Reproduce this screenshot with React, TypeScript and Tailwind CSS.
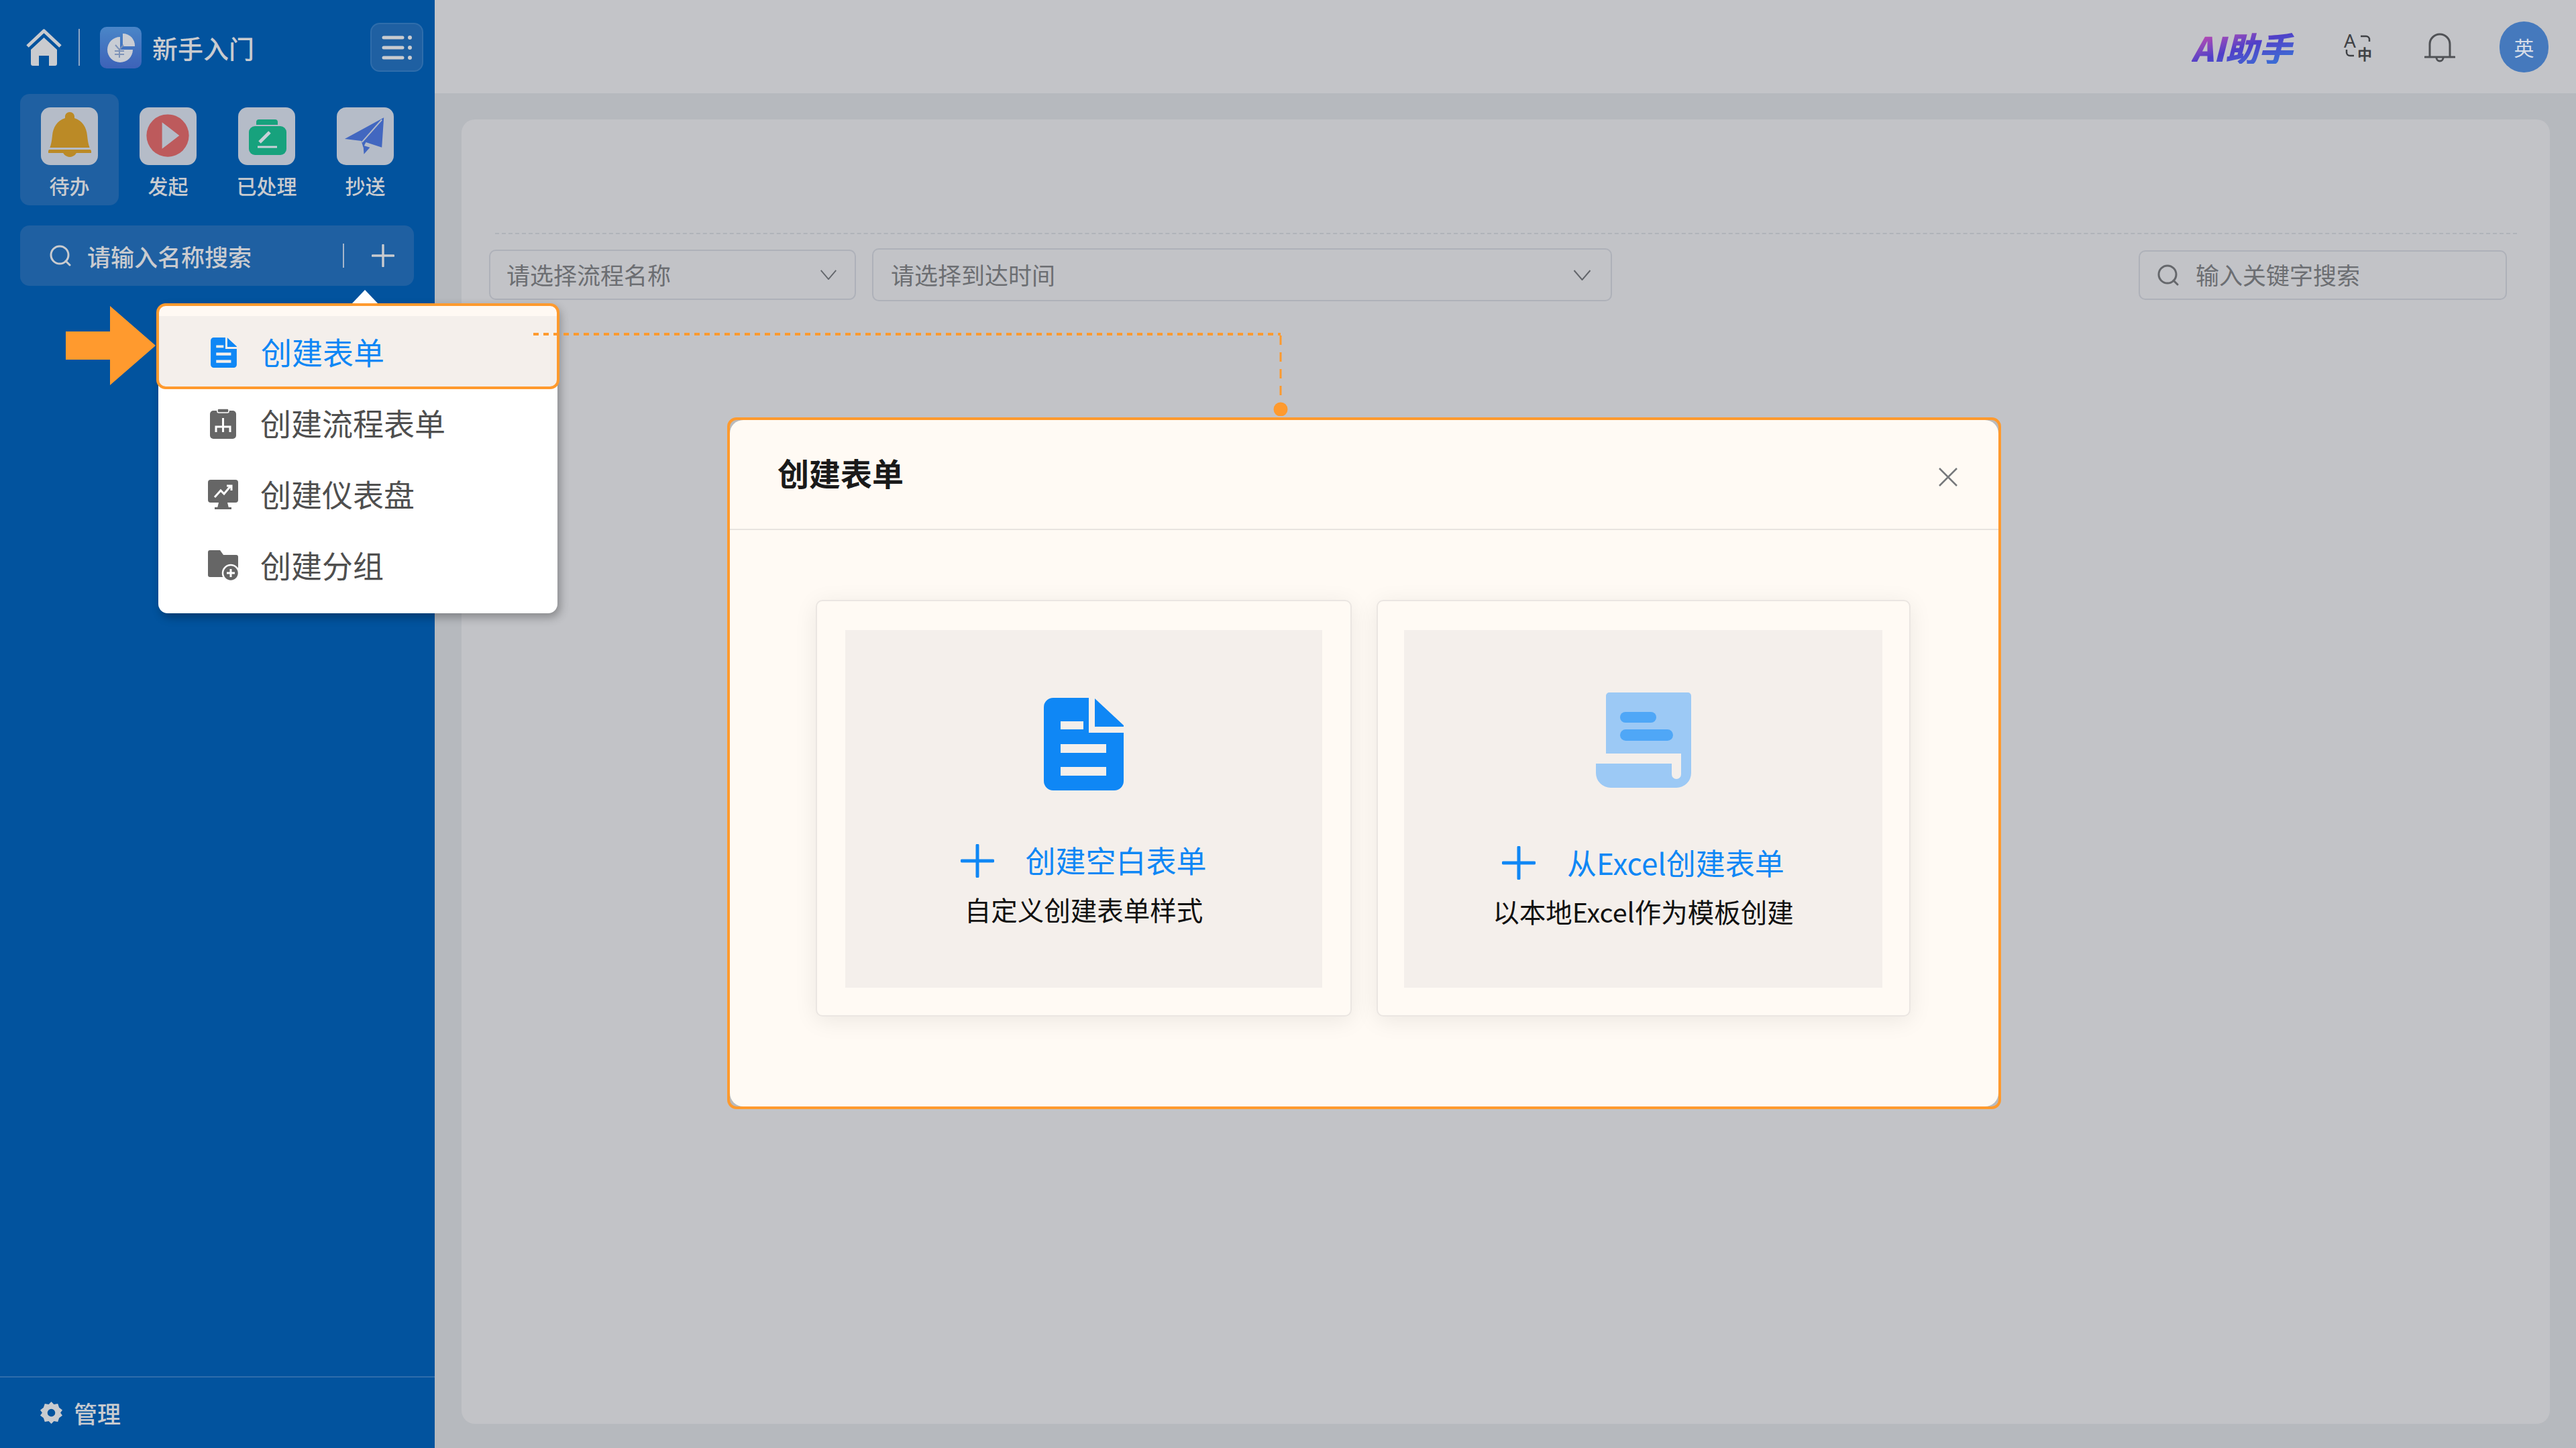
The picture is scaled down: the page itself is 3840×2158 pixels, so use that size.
import React from "react";

const DocIcon = ({ className }: { className: string }) => (
  <svg viewBox="0 0 119 138" className={className}>
    <path
      fillRule="evenodd"
      fill="currentColor"
      d="M14 0H67V52H119V124a14 14 0 0 1-14 14H14A14 14 0 0 1 0 124V14A14 14 0 0 1 14 0ZM25 35V47H59V35ZM25 69V82H93V69ZM25 103V116H93V103Z"
    />
    <path fill="currentColor" d="M76 1L119 41V43H76Z" />
  </svg>
);

const ScrollIcon = () => (
  <svg viewBox="0 0 142 142" className="w-[142px] h-[142px]">
    <path
      fill="#9cc9f5"
      d="M15 5a5 5 0 0 1 5-5H137a5 5 0 0 1 5 5V120a22 22 0 0 1-22 22H22A22 22 0 0 1 0 120V106H113V122a7 7 0 0 0 14 0V91H15Z"
    />
    <rect x="36" y="29" width="54" height="16" rx="8" fill="#4fa7f7" />
    <rect x="36" y="55" width="79" height="17" rx="8.5" fill="#4fa7f7" />
  </svg>
);

const Plus = ({ className }: { className: string }) => (
  <svg viewBox="0 0 50 50" className={className}>
    <path d="M25 2V48M2 25H48" stroke="currentColor" strokeWidth="5" strokeLinecap="round" fill="none" />
  </svg>
);

const SearchIcon = ({ className }: { className: string }) => (
  <svg viewBox="0 0 32 32" className={className}>
    <circle cx="15" cy="15" r="13" fill="none" stroke="currentColor" strokeWidth="3" />
    <path d="M24 24L30 30" stroke="currentColor" strokeWidth="3" strokeLinecap="round" />
  </svg>
);

const Chevron = ({ className }: { className: string }) => (
  <svg viewBox="0 0 26 16" className={className}>
    <path d="M1 1L13 15L25 1" fill="none" stroke="#63666b" strokeWidth="2" />
  </svg>
);

const Bell = () => (
  <svg viewBox="0 0 84 86" className="w-[84px] h-[86px]">
    <path
      fill="#bb8a26"
      d="M42 7c4 0 7 3 7 7v2c12 4 18 14 19 26 1 9 2 16 6 23v3H10v-3c4-7 5-14 6-23 1-12 7-22 19-26v-2c0-4 3-7 7-7Z"
    />
    <path fill="#bb8a26" d="M30 62H54C53 69 48 74 42 74S31 69 30 62Z" />
    <rect x="10" y="60" width="64" height="3" fill="#b5bcc8" />
  </svg>
);

const Play = () => (
  <svg viewBox="0 0 86 86" className="w-[86px] h-[86px]">
    <circle cx="42.5" cy="42" r="32" fill="#bd5a5c" />
    <path d="M34 22L60 42L34 62Z" fill="#b5bcc8" />
  </svg>
);

const Done = () => (
  <svg viewBox="0 0 84 86" className="w-[84px] h-[86px]">
    <path d="M26 26V22a4 4 0 0 1 4-4H54a4 4 0 0 1 4 4V26Z" fill="#17a27d" />
    <rect x="15" y="28" width="56" height="43" rx="9" fill="#17a27d" />
    <path d="M31 52L46 37" stroke="#c9d0d8" strokeWidth="5" />
    <path d="M28 59H57" stroke="#c9d0d8" strokeWidth="3" />
  </svg>
);

const PlaneIcon = () => (
  <svg viewBox="0 0 86 86" className="w-[86px] h-[86px]">
    <path fill="#4267c0" d="M71 15L68 60L44 52L40 60L37 50L12 47Z" />
    <path d="M68 18L38 52" stroke="#b5bcc8" strokeWidth="2" />
    <path fill="#4267c0" d="M40 57L50 60L41 70Z" />
  </svg>
);

const FlowIcon = () => (
  <svg viewBox="0 0 39 46" className="w-[39px] h-[46px]">
    <rect x="0" y="4" width="39" height="42" rx="5" fill="#666" />
    <rect x="11" y="1" width="17" height="6" rx="2" fill="#666" stroke="#fff" strokeWidth="1.5" />
    <path d="M19.5 15V24M9 36V28H30V36M19.5 24V36" stroke="#fff" strokeWidth="3" fill="none" />
  </svg>
);

const MonitorIcon = () => (
  <svg viewBox="0 0 45 44" className="w-[45px] h-[44px]">
    <rect x="0" y="0" width="45" height="34" rx="4" fill="#666" />
    <path d="M16 34H29L31 42H14Z" fill="#666" />
    <path d="M10 44H35V41H10Z" fill="#666" />
    <path d="M10 26L19 16L24 21L34 9M28 9H35V16" stroke="#fff" strokeWidth="3" fill="none" />
  </svg>
);

const FolderIcon = () => (
  <svg viewBox="0 0 45 46" className="w-[45px] h-[46px]">
    <path d="M0 3a3 3 0 0 1 3-3H18L23 7H42a3 3 0 0 1 3 3V40H3a3 3 0 0 1-3-3Z" fill="#666" />
    <circle cx="34" cy="34" r="12" fill="#666" stroke="#fff" strokeWidth="2.5" />
    <path d="M34 28V40M28 34H40" stroke="#fff" strokeWidth="3" />
  </svg>
);

const Tab = ({
  label,
  icon,
  active,
}: {
  label: string;
  icon: React.ReactNode;
  active?: boolean;
}) => (
  <div
    className={`w-[147px] h-[166px] rounded-[14px] flex flex-col items-center pt-[20px] ${active ? "bg-[#1f60a2]" : ""}`}
  >
    <div className="w-[85px] h-[86px] rounded-[14px] bg-[#b5bcc8] flex items-center justify-center overflow-hidden">
      {icon}
    </div>
    <div className="mt-[13px] text-[30px] leading-[34px] font-medium text-[#c9cbcf] whitespace-nowrap">{label}</div>
  </div>
);

const MenuRow = ({ icon, label }: { icon: React.ReactNode; label: string }) => (
  <div className="h-[106px] flex items-center pl-[73px] text-[46px] text-[#4f4f4f]">
    <div className="w-[47px] flex justify-center">{icon}</div>
    <span className="ml-[32px] leading-none pb-[4px]">{label}</span>
  </div>
);

export default function App() {
  return (
    <div className="relative w-[3840px] h-[2158px] overflow-hidden flex bg-[#b6b9be] font-['Noto_Sans_CJK_SC','Noto_Sans',sans-serif]">
      {/* sidebar */}
      <aside className="w-[648px] h-full shrink-0 bg-[#02539e] flex flex-col">
        <div className="mt-[34px] h-[73px] flex items-center pl-[38px] pr-[17px]">
          <svg viewBox="0 0 55 55" className="w-[55px] h-[55px]">
            <path d="M3 26L27.5 3L52 26" fill="none" stroke="#c9cbcf" strokeWidth="5" strokeLinejoin="round" />
            <path
              fill="#c9cbcf"
              d="M27.5 13L47 31V52a3 3 0 0 1-3 3H35V40H20V55H11a3 3 0 0 1-3-3V31Z"
            />
          </svg>
          <div className="ml-[24px] w-[2px] h-[55px] bg-[#8ea7c5]" />
          <div className="ml-[30px] w-[62px] h-[62px] rounded-[10px] bg-linear-to-b from-[#4a86c8] to-[#3d62b8] flex items-center justify-center">
            <svg viewBox="0 0 44 44" className="w-[44px] h-[44px]">
              <path d="M21 6A19 19 0 1 0 40 25H21Z" fill="#c9cdd4" />
              <path d="M25 1A18 18 0 0 1 43 20H25Z" fill="#c9cdd4" />
              <path d="M14 18L20 25L26 18M20 25V37M13 27H27M13 32H27" stroke="#7e93b8" strokeWidth="2" fill="none" />
            </svg>
          </div>
          <span className="ml-[16px] text-[38px] leading-none font-medium text-[#c9cbcf] whitespace-nowrap">新手入门</span>
          <div className="ml-auto w-[79px] h-[73px] rounded-[14px] bg-[#1f60a2] border-2 border-[#2f6dab] flex items-center justify-center">
            <svg viewBox="0 0 46 42" className="w-[46px] h-[42px]">
              <g stroke="#c9cbcf" strokeWidth="5" strokeLinecap="round">
                <path d="M3 6H31M3 21H31M3 36H31" />
              </g>
              <g fill="#c9cbcf">
                <circle cx="42" cy="6" r="3" />
                <circle cx="42" cy="21" r="3" />
                <circle cx="42" cy="36" r="3" />
              </g>
            </svg>
          </div>
        </div>

        <div className="mt-[33px] pl-[30px] flex">
          <Tab label="待办" icon={<Bell />} active />
          <Tab label="发起" icon={<Play />} />
          <Tab label="已处理" icon={<Done />} />
          <Tab label="抄送" icon={<PlaneIcon />} />
        </div>

        <div className="mt-[30px] ml-[30px] w-[587px] h-[90px] rounded-[14px] bg-[#1f60a2] flex items-center pl-[44px] text-[#c9cbcf]">
          <SearchIcon className="w-[32px] h-[32px]" />
          <span className="ml-[24px] text-[35px] leading-none font-medium whitespace-nowrap">请输入名称搜索</span>
          <div className="ml-[136px] w-[2px] h-[36px] bg-[#a6b6cb]" />
          <Plus className="ml-[41px] w-[34px] h-[34px]" />
        </div>

        <div className="mt-auto h-[107px] border-t-2 border-[#2f6dab] flex items-center pl-[60px] text-[#c9cbcf]">
          <svg viewBox="0 0 34 34" className="w-[33px] h-[33px]">
            <path
              fillRule="evenodd"
              fill="currentColor"
              d="M17 0L21 4L27 3L29 9L34 13L31 17L34 21L29 25L27 31L21 30L17 34L13 30L7 31L5 25L0 21L3 17L0 13L5 9L7 3L13 4ZM17 11a6 6 0 1 0 0 12a6 6 0 1 0 0-12Z"
            />
          </svg>
          <span className="ml-[17px] text-[35px] leading-none font-medium">管理</span>
        </div>
      </aside>

      {/* main column */}
      <main className="flex-1 flex flex-col">
        <header className="h-[139px] shrink-0 bg-[#c3c4c8] flex items-center pr-[41px] justify-end">
          <span className="pr-[4px] text-[50px] leading-none font-black italic whitespace-nowrap bg-linear-to-br from-[#e03aa8] via-[#4f3fc8] to-[#2f78d8] bg-clip-text text-transparent">
            AI助手
          </span>
          <svg viewBox="0 0 42 42" className="ml-[74px] w-[42px] h-[42px] overflow-visible">
            <text x="-1" y="22" fontSize="28" fill="#3f4145" fontFamily="Noto Sans">
              A
            </text>
            <text x="19" y="40" fontSize="22" fontWeight="700" fill="#3f4145" fontFamily="Noto Sans CJK SC">
              中
            </text>
            <path d="M24 5H32a5 5 0 0 1 5 5V13M3 25V29a5 5 0 0 0 5 5H14" fill="none" stroke="#3f4145" strokeWidth="2.5" />
          </svg>
          <svg viewBox="0 0 46 46" className="ml-[77px] w-[46px] h-[46px]">
            <path
              d="M8 38V19a15 15 0 0 1 30 0V38M1 38H45"
              fill="none"
              stroke="#505256"
              strokeWidth="3"
              strokeLinecap="round"
            />
            <path d="M18 39a5 5 0 0 0 10 0" fill="none" stroke="#505256" strokeWidth="3" />
          </svg>
          <div className="ml-[66px] w-[73px] h-[76px] rounded-full bg-[#4579bd] flex items-center justify-center text-[30px] leading-none text-[#d6dde8]">
            英
          </div>
        </header>

        <div className="flex-1 pt-[39px] pl-[40px] pr-[39px] pb-[36px] flex">
          <section className="flex-1 rounded-[20px] bg-[#c2c3c7] flex flex-col">
            <div className="mt-[169px] ml-[50px] mr-[49px] border-t-2 border-dashed border-[#b0b3b9]" />
            <div className="mt-[21px] pl-[41px] pr-[64px] flex items-center text-[35px] text-[#6c6e72]">
              <div className="w-[547px] h-[75px] rounded-[10px] border-2 border-[#aeb1b9] flex items-center pl-[24px] pr-[26px]">
                <span className="leading-none pb-[3px]">请选择流程名称</span>
                <Chevron className="ml-auto w-[26px] h-[15px]" />
              </div>
              <div className="ml-[24px] w-[1103px] h-[79px] rounded-[10px] border-2 border-[#aeb1b9] flex items-center pl-[26px] pr-[28px]">
                <span className="leading-none pb-[3px]">请选择到达时间</span>
                <Chevron className="ml-auto w-[29px] h-[16px]" />
              </div>
              <div className="ml-auto w-[549px] h-[74px] rounded-[10px] border-2 border-[#aeb1b9] flex items-center pl-[26px]">
                <SearchIcon className="w-[32px] h-[32px] text-[#65676b]" />
                <span className="ml-[25px] leading-none pb-[3px]">输入关键字搜索</span>
              </div>
            </div>
          </section>
        </div>
      </main>

      {/* annotation arrow */}
      <svg viewBox="0 0 134 118" className="absolute left-[98px] top-[456px] w-[134px] h-[118px]">
        <path d="M0 38H66V0L134 59L66 118V80H0Z" fill="#ff9a2e" />
      </svg>

      {/* dropdown menu */}
      <div className="absolute left-[236px] top-[452px] w-[595px] h-[462px] rounded-[14px] bg-white shadow-[4px_6px_14px_rgba(0,0,0,0.3)]">
        <div className="absolute left-[289px] -top-[20px] w-0 h-0 border-x-[19px] border-b-[20px] border-x-transparent border-b-white" />
        <div className="-mx-[3px] h-[128px] rounded-[14px] border-4 border-[#ff9a2e] bg-[linear-gradient(#fff9f3_15px,#f4efeb_15px)] pt-[18px] pl-[73px] flex items-center text-[46px] text-[#0f87f5]">
          <div className="w-[47px] flex justify-center">
            <DocIcon className="w-[39px] h-[45px]" />
          </div>
          <span className="ml-[32px] leading-none pb-[4px]">创建表单</span>
        </div>
        <div className="-mt-[2px]">
          <MenuRow icon={<FlowIcon />} label="创建流程表单" />
          <MenuRow icon={<MonitorIcon />} label="创建仪表盘" />
          <MenuRow icon={<FolderIcon />} label="创建分组" />
        </div>
      </div>

      {/* connector */}
      <svg viewBox="0 0 1140 130" className="absolute left-[790px] top-[490px] w-[1140px] h-[130px]">
        <path d="M5 8H1119" stroke="#ff9a2e" strokeWidth="4" strokeDasharray="8 7" fill="none" />
        <path d="M1119 10V110" stroke="#ff9a2e" strokeWidth="3" strokeDasharray="14 11" fill="none" />
        <circle cx="1119" cy="120" r="10.5" fill="#ff9a2e" />
      </svg>

      {/* dialog */}
      <div className="absolute left-[1084px] top-[622px] w-[1899px] h-[1031px] rounded-[14px] border-4 border-[#ff9a2e] bg-[#b9babd]">
        <div className="h-full rounded-[20px] bg-[#fffaf4] flex flex-col">
          <div className="h-[164px] shrink-0 border-b-2 border-[#e8e4e0] flex items-center pl-[71px] pr-[61px]">
            <span className="text-[47px] leading-none font-bold text-[#1a1a1a] pb-[7px]">创建表单</span>
            <svg viewBox="0 0 28 28" className="ml-auto w-[28px] h-[28px] mt-[7px]">
              <path d="M1 1L27 27M27 1L1 27" stroke="#77797c" strokeWidth="2.5" />
            </svg>
          </div>
          <div className="mt-[104px] pl-[128px] flex">
            <div className="w-[799px] h-[621px] rounded-[10px] border-2 border-[#ebe6e2] bg-[#fffaf4] shadow-[0_6px_34px_rgba(0,0,0,0.08)] pl-[42px] pr-[42px] pt-[43px]">
              <div className="h-[533px] bg-[#f4efeb] flex flex-col items-center pt-[101px]">
                <DocIcon className="w-[119px] h-[138px] text-[#0f87f5]" />
                <div className="mt-[75px] h-[60px] flex items-center text-[45px] text-[#0f87f5]">
                  <Plus className="w-[50px] h-[50px]" />
                  <span className="ml-[46px] leading-none pb-[3px]">创建空白表单</span>
                </div>
                <div className="mt-[17px] h-[52px] flex items-center text-[39.5px] leading-none text-[#111111] pb-[2px]">
                  自定义创建表单样式
                </div>
              </div>
            </div>
            <div className="ml-[37px] w-[796px] h-[621px] rounded-[10px] border-2 border-[#ebe6e2] bg-[#fffaf4] shadow-[0_6px_34px_rgba(0,0,0,0.08)] pl-[39px] pr-[40px] pt-[43px]">
              <div className="h-[533px] bg-[#f4efeb] flex flex-col items-center pt-[93px]">
                <ScrollIcon />
                <div className="mt-[82px] h-[60px] flex items-center text-[44px] text-[#0f87f5]">
                  <Plus className="w-[50px] h-[50px]" />
                  <span className="ml-[47px] leading-none pb-[3px]">从Excel创建表单</span>
                </div>
                <div className="mt-[17px] h-[52px] flex items-center text-[39.5px] leading-none text-[#111111] pb-[2px]">
                  以本地Excel作为模板创建
                </div>
              </div>
            </div>
          </div>
        </div>
      </div>
    </div>
  );
}
